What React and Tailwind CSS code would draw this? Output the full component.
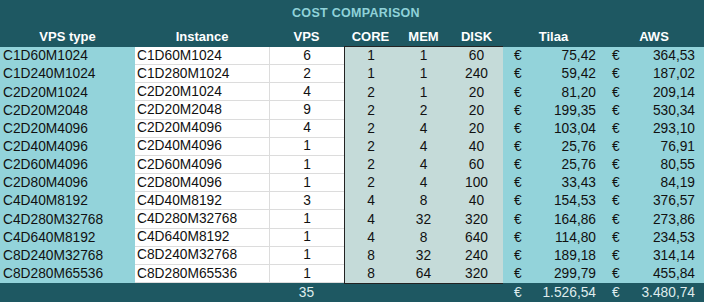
const rows = [
  ["C1D60M1024", "C1D60M1024", 6, 1, 1, 60, "75,42", "364,53"],
  ["C1D240M1024", "C1D280M1024", 2, 1, 1, 240, "59,42", "187,02"],
  ["C2D20M1024", "C2D20M1024", 4, 2, 1, 20, "81,20", "209,14"],
  ["C2D20M2048", "C2D20M2048", 9, 2, 2, 20, "199,35", "530,34"],
  ["C2D20M4096", "C2D20M4096", 4, 2, 4, 20, "103,04", "293,10"],
  ["C2D40M4096", "C2D40M4096", 1, 2, 4, 40, "25,76", "76,91"],
  ["C2D60M4096", "C2D60M4096", 1, 2, 4, 60, "25,76", "80,55"],
  ["C2D80M4096", "C2D80M4096", 1, 2, 4, 100, "33,43", "84,19"],
  ["C4D40M8192", "C4D40M8192", 3, 4, 8, 40, "154,53", "376,57"],
  ["C4D280M32768", "C4D280M32768", 1, 4, 32, 320, "164,86", "273,86"],
  ["C4D640M8192", "C4D640M8192", 1, 4, 8, 640, "114,80", "234,53"],
  ["C8D240M32768", "C8D240M32768", 1, 8, 32, 240, "189,18", "314,14"],
  ["C8D280M65536", "C8D280M65536", 1, 8, 64, 320, "299,79", "455,84"],
];

const cols = "grid grid-cols-[135px_134px_75px_53px_53px_53px_101px_100px]";

function Money({ value }) {
  return (
    <div className="flex justify-between">
      <span>€</span>
      <span>{value}</span>
    </div>
  );
}

export default function App() {
  return (
    <div className="w-[704px] h-[302px] bg-[#1e5862] font-['Liberation_Sans',Arial,sans-serif] text-[13.75px] leading-none text-[#111]">
      <div className="h-[26px] flex items-center justify-center pl-[8px] pt-[1px] text-[12.5px] font-bold tracking-[0.3px] text-[#8fd2d9]">
        COST COMPARISON
      </div>
      <div className={`${cols} h-[21px] items-center text-[13px] font-bold text-white text-center`}>
        <div>VPS type</div>
        <div>Instance</div>
        <div>VPS</div>
        <div className="h-full flex items-center justify-center border-b border-[#222]">CORE</div>
        <div className="h-full flex items-center justify-center border-b border-[#222]">MEM</div>
        <div className="h-full flex items-center justify-center border-b border-[#222]">DISK</div>
        <div>Tilaa</div>
        <div>AWS</div>
      </div>
      <div className="grid grid-rows-[repeat(13,1fr)] h-[236px]">
        {rows.map((r, i) => (
          <div key={i} className={`${cols} items-stretch`}>
            <div className="bg-[#93d3da] flex items-center pl-[3px]">{r[0]}</div>
            <div className="bg-white flex items-center pl-[2px] border-b border-[#dcdcdc]">{r[1]}</div>
            <div className="bg-white flex items-center justify-center border-b border-l border-[#dcdcdc]">{r[2]}</div>
            <div className="bg-[#c5dbd9] flex items-center justify-center border-l border-[#222]">{r[3]}</div>
            <div className="bg-[#c5dbd9] flex items-center justify-center">{r[4]}</div>
            <div className="bg-[#c5dbd9] flex items-center justify-center">{r[5]}</div>
            <div className="bg-[#93d3da] flex flex-col justify-center pl-[11px] pr-[8px]">
              <Money value={r[6]} />
            </div>
            <div className="bg-[#93d3da] flex flex-col justify-center pl-[8px] pr-[9px]">
              <Money value={r[7]} />
            </div>
          </div>
        ))}
      </div>
      <div className={`${cols} h-[19px] items-stretch text-[#dfeced]`}>
        <div></div>
        <div></div>
        <div className="flex items-center justify-center">35</div>
        <div className="border-t border-[#222]"></div>
        <div className="border-t border-[#222]"></div>
        <div className="border-t border-[#222]"></div>
        <div className="flex flex-col justify-center pl-[11px] pr-[8px]">
          <Money value="1.526,54" />
        </div>
        <div className="flex flex-col justify-center pl-[8px] pr-[9px]">
          <Money value="3.480,74" />
        </div>
      </div>
    </div>
  );
}
